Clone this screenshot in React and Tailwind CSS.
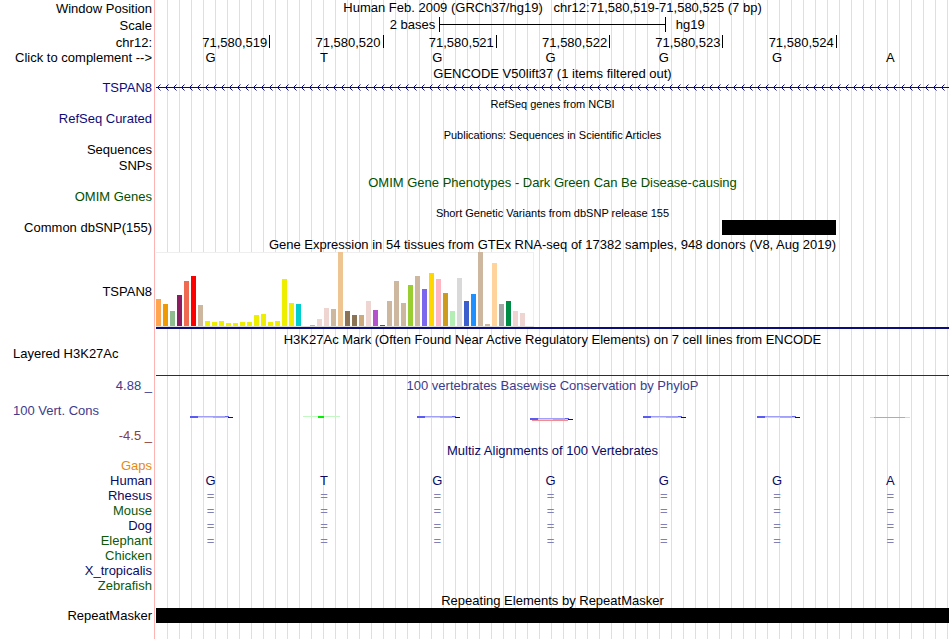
import clsx from 'clsx'

const POSITIONS = ['71,580,519', '71,580,520', '71,580,521', '71,580,522', '71,580,523', '71,580,524']
const BASES = ['G', 'T', 'G', 'G', 'G', 'G', 'A']

const TISSUES = [
  [27, '#ffa54f'], [22, '#ee9a00'], [15, '#8fbc8f'], [31, '#8b1c62'], [45, '#ee6a50'], [50, '#ff0000'],
  [21, '#cdb79e'], [5, '#eeee00'], [4, '#eeee00'], [5, '#eeee00'], [3, '#eeee00'], [3, '#eeee00'],
  [4, '#eeee00'], [4, '#eeee00'], [11, '#eeee00'], [12, '#eeee00'], [4, '#eeee00'], [5, '#eeee00'],
  [47, '#eeee00'], [23, '#eeee00'], [22, '#00cdcd'], [0, '#ee82ee'], [1, '#9ac0cd'], [7, '#eed5d2'],
  [18, '#eed5d2'], [17, '#cdb79e'], [74, '#eec591'], [15, '#8b7355'], [11, '#8b7355'], [11, '#cdaa7d'],
  [25, '#eed5d2'], [16, '#b452cd'], [1, '#7a378b'], [25, '#cdb79e'], [45, '#cdb79e'], [23, '#cdb79e'],
  [41, '#9acd32'], [50, '#cdb79e'], [37, '#7a67ee'], [53, '#ffd700'], [47, '#ffb6c1'], [33, '#cd9b1d'],
  [15, '#b4eeb4'], [48, '#d9d9d9'], [25, '#3a5fcd'], [32, '#1e90ff'], [74, '#cdb79e'], [2, '#cdb79e'],
  [63, '#ffd39b'], [22, '#a6a6a6'], [25, '#008b45'], [15, '#eed5d2'], [13, '#eed5d2'], [0, '#ff00ff'],
]

const SPECIES = [
  { name: 'Gaps', color: 'text-[#e6890f]' },
  { name: 'Human', color: 'text-[#0a0a64]', cells: BASES },
  { name: 'Rhesus', color: 'text-[#0a0a64]', cells: Array(7).fill('=') },
  { name: 'Mouse', color: 'text-[#0a5a0a]', cells: Array(7).fill('=') },
  { name: 'Dog', color: 'text-[#0a0a64]', cells: Array(7).fill('=') },
  { name: 'Elephant', color: 'text-[#0a5a0a]', cells: Array(7).fill('=') },
  { name: 'Chicken', color: 'text-[#0a5a0a]' },
  { name: 'X_tropicalis', color: 'text-[#0a0a64]' },
  { name: 'Zebrafish', color: 'text-[#0a5a0a]' },
]

const SCORES = ['blue', 'green', 'blue', 'mixed', 'blue', 'blue', 'red']

function Track({ label, className, children }) {
  return (
    <section className={clsx('grid grid-cols-[154px_minmax(0,1fr)]', className)}>
      <div className="flex flex-col items-end justify-end pr-[2px]">{label}</div>
      <div className="flex flex-col pl-[2px] pr-px">{children}</div>
    </section>
  )
}

function Title({ small, className, children }) {
  return (
    <h2 className={clsx('h-[15px] text-center whitespace-pre', small ? 'text-[11px]' : 'text-[13px]', className)}>
      {children}
    </h2>
  )
}

function BaseRow({ cells, className }) {
  return (
    <div className={clsx('grid grid-cols-7', className)}>
      {cells.map((cell, i) => (
        <span key={i} className="pr-1 text-center">{cell}</span>
      ))}
    </div>
  )
}

function GeneArrows() {
  return (
    <svg className="block h-[7px] w-full" aria-hidden="true">
      <defs>
        <pattern id="strand" width="8" height="7" patternUnits="userSpaceOnUse">
          <path d="M4.5 0.5 L1.5 3.5 L4.5 6.5" fill="none" stroke="#0c0c78" />
        </pattern>
      </defs>
      <rect width="100%" height="7" fill="url(#strand)" />
      <rect y="3" width="100%" height="1" fill="#0c0c78" />
    </svg>
  )
}

function Score({ kind }) {
  return (
    <svg width="43" height="6" className="block" aria-hidden="true">
      {kind === 'green' && (
        <>
          <rect x="0" y="1" width="37" height="1" fill="#c3f7c3" />
          <rect x="15" y="1" width="6" height="2" fill="#00f000" />
        </>
      )}
      {kind === 'red' && (
        <>
          <rect x="0" y="2" width="40" height="1" fill="#f9cccc" />
          <rect x="4" y="2" width="31" height="1" fill="#f09090" />
        </>
      )}
      {(kind === 'blue' || kind === 'mixed') && (
        <g transform={kind === 'mixed' ? 'translate(0 2)' : undefined}>
          <rect x="1" y="1" width="38" height="1" fill="#a0a0fa" />
          <rect x="0" y="1" width="8" height="2" fill="#5a5af5" />
          <rect x="8" y="2" width="30" height="1" fill="#cfcffc" />
          <rect x="23" y="2" width="12" height="1" fill="#aaaafa" />
          <rect x="35" y="1" width="4" height="1" fill="#6464f5" />
          <rect x="38" y="2" width="5" height="1" fill="#0000c8" />
        </g>
      )}
      {kind === 'mixed' && <rect x="2" y="5" width="36" height="1" fill="#f58c8c" />}
    </svg>
  )
}

function Expression() {
  return (
    <div className="border-b-2 border-[#0c0c78]">
      <div className="flex h-[75px] w-[378px] items-end gap-[2px] border-b border-[#dcdcdc] bg-white shadow-[inset_-1px_1px_0_#eeeeee]">
        {TISSUES.map(([height, color], i) => (
          <span key={i} className="w-[5px] shrink-0" style={{ height, backgroundColor: color }} />
        ))}
      </div>
    </div>
  )
}

export default function App() {
  return (
    <main className="relative min-h-screen bg-white font-['Liberation_Sans',Arial,sans-serif] text-[13px] leading-[15px] text-black">
      <div className="absolute inset-y-0 left-[154px] right-0 border-l border-[#ffb4b4]">
        <div className="ml-px h-full bg-[repeating-linear-gradient(to_right,transparent_0px,transparent_11px,#dcdcf8_11px,#dcdcf8_12px)]" />
      </div>

      <div className="relative">
        <Track className="h-4" label="Window Position">
          <h1 className="text-center whitespace-pre">{'Human Feb. 2009 (GRCh37/hg19)   chr12:71,580,519-71,580,525 (7 bp)'}</h1>
        </Track>
        <Track className="h-[17px]" label="Scale">
          <div className="grid grid-cols-[5fr_4fr_5fr] pt-px">
            <span className="pr-1 text-right">2 bases</span>
            <div className="flex h-[15px] items-center border-x border-black">
              <div className="h-px w-full bg-black" />
            </div>
            <span className="pl-[10px]">hg19</span>
          </div>
        </Track>
        <Track className="h-[17px] pt-[2px]" label="chr12:">
          <div className="grid grid-cols-7">
            {POSITIONS.map((position) => (
              <span key={position} className="-mr-px h-[13px] border-r border-black pr-[2px] text-right">{position}</span>
            ))}
          </div>
        </Track>
        <Track className="h-[15px]" label={<button type="button">Click to complement --&gt;</button>}>
          <BaseRow cells={BASES} />
        </Track>

        <Track className="h-[31px]" label={<span className="pb-px text-[#0c0c78]">TSPAN8</span>}>
          <Title className="pt-px">GENCODE V50lift37 (1 items filtered out)</Title>
          <div className="pt-1">
            <GeneArrows />
          </div>
        </Track>

        <Track className="h-[31px]" label={<span className="pb-px text-[#0c0c78]">RefSeq Curated</span>}>
          <Title small className="pt-px">RefSeq genes from NCBI</Title>
        </Track>

        <Track
          className="h-[47px]"
          label={<><span>Sequences</span><span className="py-px">SNPs</span></>}
        >
          <Title small className="pt-px">Publications: Sequences in Scientific Articles</Title>
        </Track>

        <Track className="h-[31px]" label={<span className="pb-px text-[#005000]">OMIM Genes</span>}>
          <Title className="pt-px text-[#005000]">OMIM Gene Phenotypes - Dark Green Can Be Disease-causing</Title>
        </Track>

        <Track className="h-[31px]" label={<span className="pb-px">Common dbSNP(155)</span>}>
          <Title small className="pt-px">Short Genetic Variants from dbSNP release 155</Title>
          <div className="grid grid-cols-7">
            <div className="col-start-6 h-[15px] bg-black" />
          </div>
        </Track>

        <Track className="h-[94px] pt-px" label={<span className="pb-[31px]">TSPAN8</span>}>
          <Title>Gene Expression in 54 tissues from GTEx RNA-seq of 17382 samples, 948 donors (V8, Aug 2019)</Title>
          <Expression />
        </Track>

        <Track className="h-[46px] pt-[2px]" label={<span className="w-full pb-[15px] pl-[13px]">Layered H3K27Ac</span>}>
          <Title>H3K27Ac Mark (Often Found Near Active Regulatory Elements) on 7 cell lines from ENCODE</Title>
          <div className="mt-auto border-b border-[#302070]" />
        </Track>

        <Track
          className="h-[67px] pt-[2px]"
          label={
            <div className="flex h-full w-full flex-col justify-between text-right">
              <span className="text-[#3c3c8c]">4.88 _</span>
              <span className="pl-[13px] text-left text-[#3c3c8c]">100 Vert. Cons</span>
              <span className="text-[#8c3c3c]">-4.5 _</span>
            </div>
          }
        >
          <Title className="text-[#3c3c8c]">100 vertebrates Basewise Conservation by PhyloP</Title>
          <div className="grid grid-cols-7 pt-[22px]">
            {SCORES.map((kind, i) => (
              <div key={i} className="flex justify-center pr-[2px]">
                <Score kind={kind} />
              </div>
            ))}
          </div>
        </Track>

        <Track className="h-[15px]">
          <Title className="text-[#0a0a64]">Multiz Alignments of 100 Vertebrates</Title>
        </Track>
        {SPECIES.map(({ name, color, cells }) => (
          <Track key={name} className="h-[15px]" label={<span className={color}>{name}</span>}>
            {cells && <BaseRow cells={cells} className={cells === BASES ? 'text-[#0a0a64]' : 'text-[#8080b4]'} />}
          </Track>
        ))}

        <Track className="h-[30px]" label="RepeatMasker">
          <Title>Repeating Elements by RepeatMasker</Title>
          <div className="h-[15px] bg-black" />
        </Track>
      </div>
    </main>
  )
}
